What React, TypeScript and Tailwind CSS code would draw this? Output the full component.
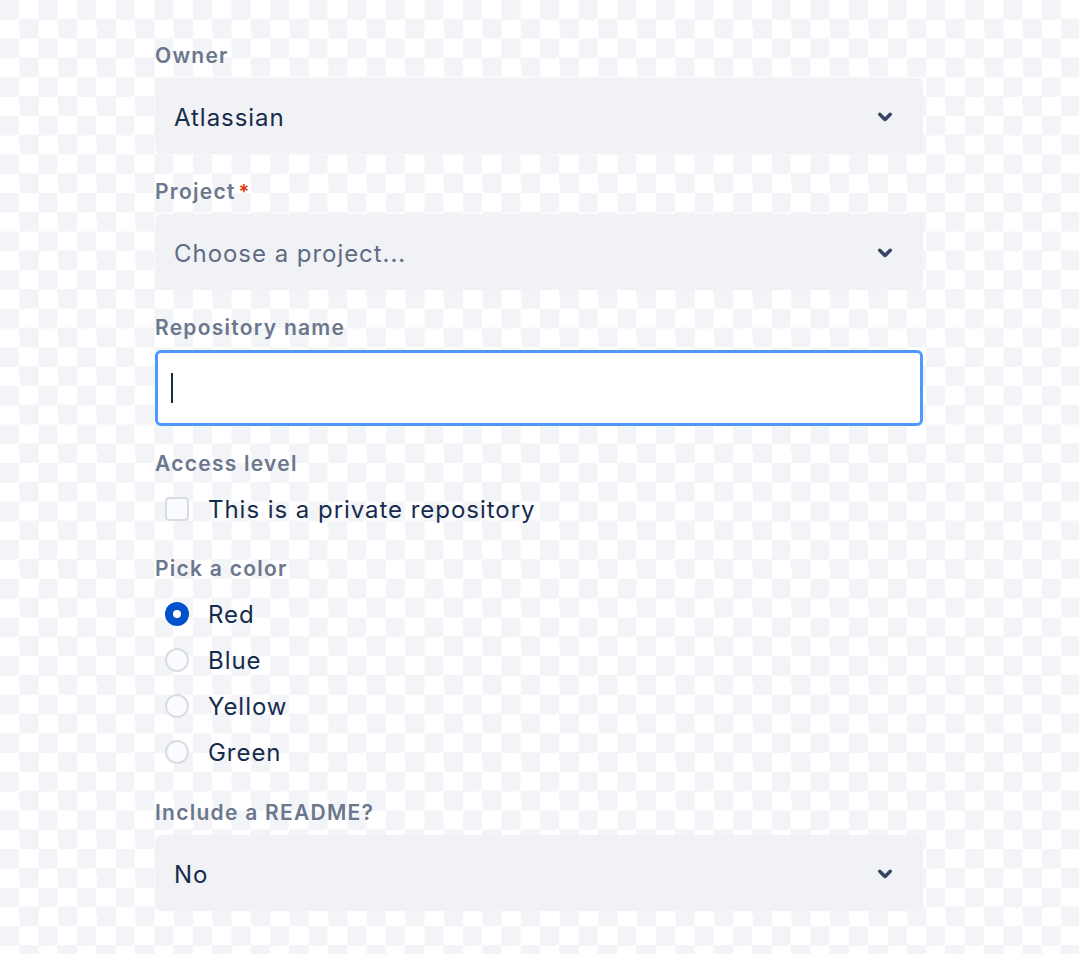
import React from 'react';

const ChevronDown = () => (
  <svg width="42" height="42" viewBox="0 0 24 24" className="shrink-0">
    <path
      fill="#344563"
      d="M8.292 10.293a1.009 1.009 0 0 0 0 1.419l2.939 2.965c.218.215.5.322.779.322s.556-.107.769-.322l2.93-2.955a1.01 1.01 0 0 0 0-1.419.987.987 0 0 0-1.406 0l-2.298 2.317-2.307-2.327a.99.99 0 0 0-1.406 0z"
    />
  </svg>
);

const Label = ({ children, required }: { children: React.ReactNode; required?: boolean }) => (
  <div className="h-[24px] leading-[24px] pt-[2px] text-[21px] font-semibold tracking-[0.06em] text-[#6b778c] mb-[11px] flex items-center">
    {children}
    {required && <span className="text-[#de350b] ml-[3px] text-[20px]">*</span>}
  </div>
);

const Select = ({ value, placeholder }: { value: string; placeholder?: boolean }) => (
  <div className="h-[76px] rounded-[6px] bg-[#f1f2f5] flex items-center justify-between pl-[19px] pr-[17px]">
    <span
      className={
        placeholder
          ? 'pt-[3px] text-[24px] tracking-[0.04em] text-[#5e6c84]'
          : 'pt-[3px] text-[24px] tracking-[0.04em] text-[#172b4d]'
      }
    >
      {value}
    </span>
    <ChevronDown />
  </div>
);

const Radio = ({ label, checked }: { label: string; checked?: boolean }) => (
  <div className="h-[46px] flex items-center pl-[10px]">
    {checked ? (
      <span className="w-[24px] h-[24px] rounded-full bg-[#0052cc] flex items-center justify-center">
        <span className="w-[8px] h-[8px] rounded-full bg-white" />
      </span>
    ) : (
      <span className="w-[24px] h-[24px] rounded-full border-2 border-[#d9dce2] bg-[#fafbfc]" />
    )}
    <span className="ml-[19px] pt-[2px] text-[24px] tracking-[0.04em] text-[#172b4d]">{label}</span>
  </div>
);

export default function App() {
  return (
    <div
      className="min-h-[954px] w-full bg-[repeating-conic-gradient(#fff_0_25%,#f3f4f7_0_50%)] bg-[length:38.6px_38.6px] pt-[43px] pl-[155px]"
      style={{ fontFamily: 'Inter, "Noto Sans", sans-serif' }}
    >
      <div className="w-[768px] flex flex-col">
        <Label>Owner</Label>
        <Select value="Atlassian" />

        <div className="mt-[25px]">
          <Label required>Project</Label>
          <Select value="Choose a project..." placeholder />
        </div>

        <div className="mt-[25px]">
          <Label>Repository name</Label>
          <div className="h-[76px] rounded-[6px] bg-white border-[3px] border-[#4c9aff] flex items-center pl-[13px]">
            <span className="w-[2px] h-[30px] bg-[#172b4d]" />
          </div>
        </div>

        <div className="mt-[25px]">
          <Label>Access level</Label>
          <div className="h-[46px] flex items-center pl-[10px]">
            <span className="w-[24px] h-[24px] rounded-[4px] border-2 border-[#d9dce2] bg-[#fafbfc]" />
            <span className="ml-[19px] pt-[2px] text-[24px] tracking-[0.04em] text-[#172b4d]">This is a private repository</span>
          </div>
        </div>

        <div className="mt-[24px]">
          <Label>Pick a color</Label>
          <Radio label="Red" checked />
          <Radio label="Blue" />
          <Radio label="Yellow" />
          <Radio label="Green" />
        </div>

        <div className="mt-[25px]">
          <Label>Include a README?</Label>
          <Select value="No" />
        </div>
      </div>
    </div>
  );
}
